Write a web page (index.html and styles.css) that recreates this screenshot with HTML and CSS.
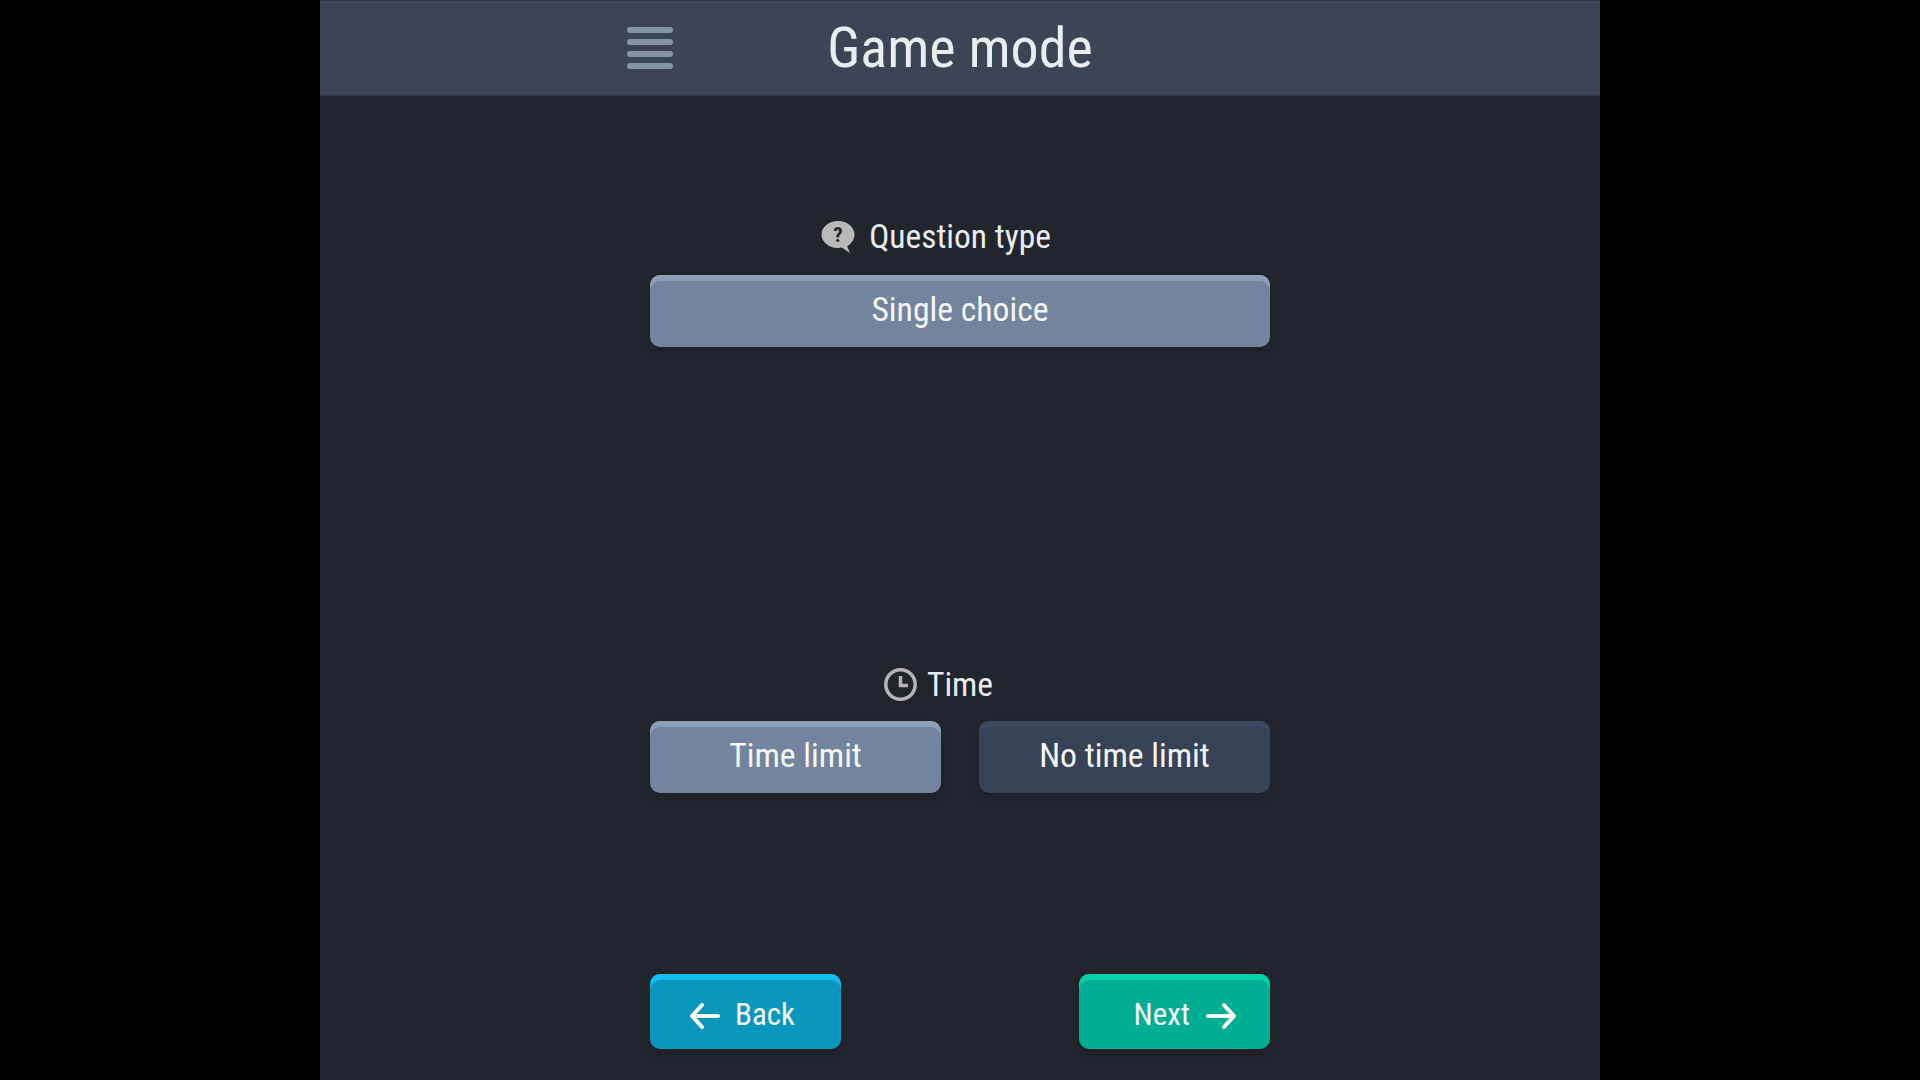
FILE: index.html

```html
<!DOCTYPE html>
<html lang="en">
<head>
  <meta charset="UTF-8">
  <title>Game mode</title>
  <link rel="stylesheet" href="styles.css">
</head>
<body>

  <div class="panel">
    <header class="topbar">
      <div class="burger">
        <span></span><span></span><span></span><span></span>
      </div>
      <h1 class="title">Game mode</h1>
    </header>

    <main class="content">
      <section class="group">
        <div class="label">
          <svg class="label-icon" width="34" height="32" viewBox="0 0 34 32">
            <path class="bubble" d="M17 0C8 0 .5 6.200.5 13.500S8 27 17 27c1.300 0 2.500-.1 3.700-.4L29 32l-2.800-6.800C30.500 22.600 33.500 18.300 33.500 13.500 33.500 6.200 26 0 17 0z"/>
            <text class="bubble-mark" x="17" y="21" text-anchor="middle">?</text>
          </svg>
          <span class="label-text">Question type</span>
        </div>
        <div class="options">
          <button class="opt active">Single choice</button>
        </div>
      </section>

      <section class="group time-group">
        <div class="label">
          <svg class="label-icon" width="33" height="33" viewBox="0 0 33 33">
            <circle class="clock" cx="16.500" cy="16.500" r="14.700"/>
            <path class="clock" d="M16.500 8v9.500h7.500"/>
          </svg>
          <span class="label-text">Time</span>
        </div>
        <div class="options">
          <button class="opt active">Time limit</button>
          <button class="opt">No time limit</button>
        </div>
      </section>

      <div class="nav">
        <button class="nav-btn back">
          <svg class="nav-icon" width="32" height="28" viewBox="0 0 32 28"><path class="arrow" d="M30 14H4M14 3 4 14l10 11"/></svg>
          <span class="btn-text">Back</span>
        </button>
        <button class="nav-btn next">
          <span class="btn-text">Next</span>
          <svg class="nav-icon" width="32" height="28" viewBox="0 0 32 28"><path class="arrow" d="M3 14h26M19 3l10 11-10 11"/></svg>
        </button>
      </div>
    </main>
  </div>

</body>
</html>
```

FILE: styles.css

```css
* {
  box-sizing: border-box;
}

body {
  margin: 0;
  height: 1080px;
  overflow: hidden;
  background: #000;
  font-family: 'Roboto', 'Liberation Sans', sans-serif;
  font-stretch: 75%;
  color: #e9ecf1;
}

.panel {
  width: 1280px;
  height: 1080px;
  margin: 0 auto;
  background: #22252c;
}

.topbar {
  height: 96px;
  padding: 0 307px;
  display: grid;
  grid-template-columns: 1fr auto 1fr;
  align-items: center;
  background: #3b4556;
  border-top: 1px solid #2f3648;
  border-bottom: 1px solid #333b4b;
}

.burger {
  width: 46px;
  display: flex;
  flex-direction: column;
  gap: 6px;
}

.burger span {
  height: 6px;
  border-radius: 3px;
  background: #8495aa;
}

.title {
  margin: 0;
  font-size: 56px;
  font-weight: 400;
  line-height: 1;
  white-space: nowrap;
}

.content {
  width: 620px;
  margin: 0 auto;
  padding-top: 121px;
}

.time-group {
  margin-top: 318px;
}

.time-group .label {
  margin-bottom: 16px;
  column-gap: 10px;
}

.label {
  height: 40px;
  margin-bottom: 18px;
  padding-bottom: 2px;
  display: grid;
  grid-template-columns: 1fr auto 1fr;
  align-items: center;
  column-gap: 14px;
}

.label-icon {
  justify-self: end;
}

.label-text {
  font-size: 33.500px;
}

.bubble {
  fill: #b9b9b9;
}

.bubble-mark {
  font-size: 21px;
  font-weight: 700;
  fill: #22252c;
}

.clock {
  fill: none;
  stroke: #b5b5b5;
  stroke-width: 3.500;
}

.options {
  display: flex;
  gap: 38px;
}

.opt {
  flex: 1;
  height: 72px;
  padding: 0 0 3px;
  border: none;
  border-radius: 10px;
  font-family: inherit;
  font-stretch: inherit;
  font-size: 33.700px;
  color: #f6f7f9;
  background: #364356;
  box-shadow: inset 0 6px 0 #3b4960, 0 5px 8px rgba(0, 0, 0, 0.12);
}

.opt.active {
  background: #73859e;
  box-shadow: inset 0 6px 0 #8aa0b9, 0 5px 8px rgba(0, 0, 0, 0.12);
}

.nav {
  margin-top: 181px;
  display: flex;
  justify-content: space-between;
}

.nav-btn {
  width: 191px;
  height: 75px;
  display: flex;
  align-items: center;
  gap: 15px;
  padding: 6px 0 0;
  border: none;
  border-radius: 10px;
  font-family: inherit;
  font-stretch: inherit;
  font-size: 31px;
  color: #f6f7f9;
}

.nav-icon {
  margin-top: 2px;
}

.back {
  padding-left: 38px;
  background: #0a97bd;
  box-shadow: inset 0 6px 0 #12bff0, 0 5px 8px rgba(0, 0, 0, 0.15);
}

.next {
  justify-content: flex-end;
  padding-right: 33px;
  background: #00ae93;
  box-shadow: inset 0 6px 0 #00d2a8, 0 5px 8px rgba(0, 0, 0, 0.15);
}

.arrow {
  fill: none;
  stroke: #fff;
  stroke-width: 4;
  stroke-linecap: round;
  stroke-linejoin: round;
}
```
